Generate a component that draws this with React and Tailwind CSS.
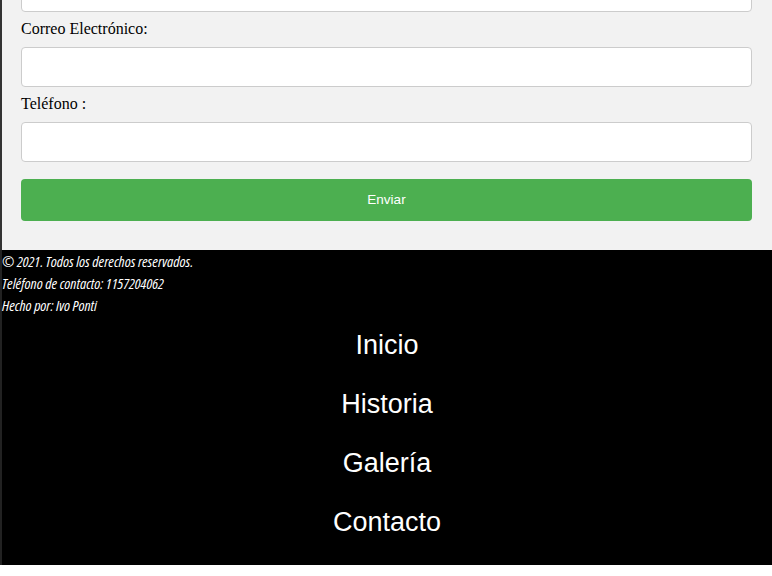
import React from 'react';

const inputClass =
  'block w-full h-[40px] bg-white border border-[#cccccc] rounded-[4px] px-3 outline-none';

const Field = ({ label, type = 'text' }) => (
  <>
    <label className="block mt-2 mb-[9px] text-[16px] leading-[18px] text-black font-['Liberation_Serif',serif]">
      {label}
    </label>
    <input type={type} className={inputClass} />
  </>
);

const App = () => {
  const links = ['Inicio', 'Historia', 'Galería', 'Contacto'];

  return (
    <div className="min-h-screen bg-white">
      {/* Form */}
      <section className="bg-[#f2f2f2] border-l-2 border-[#333333] overflow-hidden">
        <div className="pl-[19px] pr-[20px] pb-[29px]">
          <input type="text" className={`${inputClass} -mt-[28px]`} />
          <Field label="Correo Electrónico:" type="email" />
          <Field label="Teléfono :" type="tel" />
          <button className="mt-[17px] w-full h-[42px] bg-[#4caf50] rounded-[4px] text-white text-[13.5px] font-['Liberation_Sans',Arial,sans-serif]">
            Enviar
          </button>
        </div>
      </section>

      {/* Footer */}
      <footer className="bg-black border-l-2 border-[#222222] pb-[13px]">
        <div className="text-white italic text-[15px] leading-[22px] font-['Open_Sans',sans-serif] font-stretch-condensed">
          <p>© 2021. Todos los derechos reservados.</p>
          <p>Teléfono de contacto: 1157204062</p>
          <p>Hecho por: Ivo Ponti</p>
        </div>
        <nav className="flex flex-col">
          {links.map((l) => (
            <a
              key={l}
              href="#"
              className="h-[59px] flex items-center justify-center text-white text-[27px] font-['Liberation_Sans',Arial,sans-serif]"
            >
              {l}
            </a>
          ))}
        </nav>
      </footer>
    </div>
  );
};

export default App;
